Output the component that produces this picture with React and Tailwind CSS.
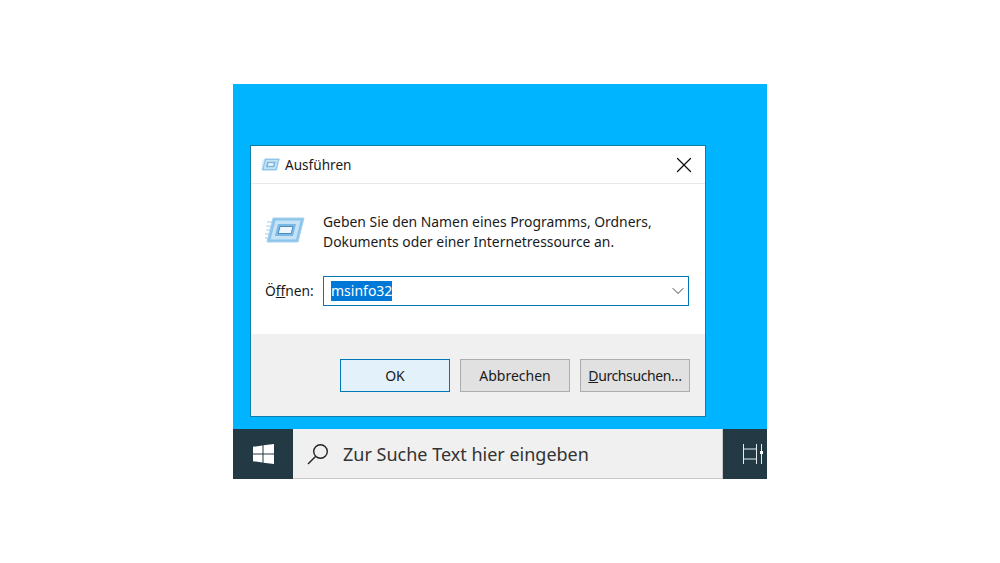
import React from 'react';
import { X, ChevronDown } from 'lucide-react';

const font = "font-['Noto_Sans','Open_Sans',sans-serif]";

function RunIcon({ className }) {
  return (
    <svg viewBox="0 0 40 26" className={className}>
      <path d="M2 5h7M1 9h7M1 13h6M0 17h6M0 21h5" stroke="#c4e0f2" strokeWidth="1.5" />
      <path d="M8 1h31l-6 24H2z" fill="#8cc4ea" stroke="#a6d1ee" />
      <path d="M10.500 3.500h25l-4.500 19H5.500z" fill="#c5e3f7" />
      <path d="M13 7h18l-3 12H10z" fill="#7db8e2" />
      <path d="M15 9.500h13l-1.800 7H13.200z" fill="#eef7fd" stroke="#4a8fc4" />
    </svg>
  );
}

function Button({ children, primary }) {
  return (
    <button
      className={
        primary
          ? 'w-[110px] h-[33px] border border-[#0078b8] bg-[#e3f1fb] text-[14px] text-[#1a1a1a]'
          : 'w-[110px] h-[33px] border border-[#adadad] bg-[#e1e1e1] text-[14px] text-[#1a1a1a]'
      }
    >
      {children}
    </button>
  );
}

export default function App() {
  return (
    <div className={`w-[1000px] h-[563px] bg-white pt-[84px] pl-[233px] ${font}`}>
      <div className="w-[534px] h-[395px] flex flex-col bg-[#00b4ff]">
        <div className="flex-1 pt-[61px] pl-[17px]">
          <div className="w-[456px] h-[272px] flex flex-col bg-white border border-[#0d7fa8]">
            <div className="h-[38px] shrink-0 flex items-center border-b border-[#e8e8e8] pl-[10px] pr-[8px]">
              <RunIcon className="w-[19px] h-[13px]" />
              <span className="ml-[5px] pt-[1px] text-[13.6px] text-[#1a1a1a]">Ausführen</span>
              <X size={26} strokeWidth={1.2} className="ml-auto text-[#111]" />
            </div>
            <div className="flex-1 flex flex-col">
              <div className="flex pl-[14px] pt-[28px]">
                <RunIcon className="w-[40px] h-[26px] mt-[5px]" />
                <p className="ml-[18px] text-[13.9px] leading-[20px] text-[#1a1a1a]">
                  Geben Sie den Namen eines Programms, Ordners,
                  <br />
                  Dokuments oder einer Internetressource an.
                </p>
              </div>
              <div className="flex items-center pl-[14px] mt-[24px]">
                <span className="w-[58px] text-[13.8px] text-[#1a1a1a]">
                  Ö<span className="underline">f</span>fnen:
                </span>
                <div className="w-[366px] h-[30px] flex items-center border border-[#0078b8] pl-[7px]">
                  <span className="bg-[#0078d7] text-white text-[14px] leading-[20px]">msinfo32</span>
                  <ChevronDown size={20} strokeWidth={1.1} className="ml-auto text-[#333]" />
                </div>
              </div>
            </div>
            <div className="h-[82px] shrink-0 flex justify-end gap-[10px] bg-[#f0f0f0] pt-[25px] pr-[15px]">
              <Button primary>OK</Button>
              <Button>Abbrechen</Button>
              <Button>
                <span className="tracking-[-0.4px]">
                  <span className="underline">D</span>urchsuchen…
                </span>
              </Button>
            </div>
          </div>
        </div>
        <div className="h-[50px] shrink-0 flex bg-[#233a45]">
          <div className="w-[60px] flex items-center justify-center">
            <svg viewBox="0 0 21 20" className="w-[21px] h-[20px]" fill="#fff">
              <path d="M0 2.800 9.500 1.400V9.500H0zM10.500 1.300 21 0V9.500H10.500zM0 10.500H9.500V18.600L0 17.200zM10.500 10.500H21V20L10.500 18.700z" />
            </svg>
          </div>
          <div className="w-[430px] flex items-center bg-[#f0f0f0] border-b border-r border-[#c8c8c8] pl-[14px]">
            <svg viewBox="0 0 22 22" className="w-[22px] h-[22px]" fill="none" stroke="#222" strokeWidth="1.4">
              <circle cx="13.500" cy="8.500" r="6.800" />
              <path d="M8.500 13.500 1 21" />
            </svg>
            <span className="ml-[14px] pt-[2px] text-[18px] text-[#333]">Zur Suche Text hier eingeben</span>
          </div>
          <div className="flex-1 flex items-center pl-[20px]">
            <svg viewBox="0 0 21 20" className="w-[21px] h-[20px]" fill="none" stroke="#e8eef0" strokeWidth="1">
              <path d="M.5 0v5M13.500 0v5M.5 5h13v10H.5zM.5 15v5M13.500 15v5M18.500 0v20" />
              <rect x="17" y="7" width="3" height="3" fill="#fff" stroke="none" />
            </svg>
          </div>
        </div>
      </div>
    </div>
  );
}
